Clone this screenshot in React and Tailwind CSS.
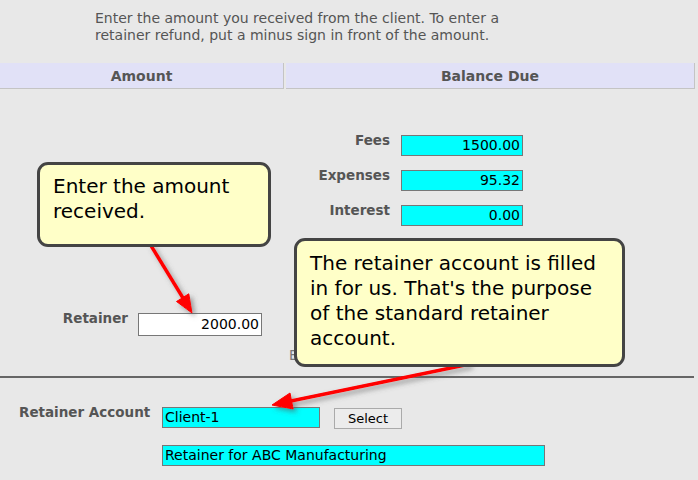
import React from 'react';

const cyanInput = 'h-[21px] bg-[#00ffff] border border-[#777] text-[14px] leading-[19px] text-black';

function FeeRow({ label, value }) {
  return (
    <div className="flex items-start h-[21px]">
      <div className="w-[104px] -mt-[3px] text-right text-[13.5px] leading-[16px] font-bold text-[#555]">{label}</div>
      <div className={`ml-[11px] w-[122px] text-right pr-[2px] ${cyanInput}`}>{value}</div>
    </div>
  );
}

function Arrows() {
  return (
    <svg className="absolute inset-0 pointer-events-none" width="698" height="480">
      <defs>
        <filter id="sh" x="-20%" y="-20%" width="140%" height="140%">
          <feDropShadow dx="3" dy="3" stdDeviation="2.5" floodColor="#555" floodOpacity="0.55" />
        </filter>
      </defs>
      <g filter="url(#sh)" fill="#ff0000" stroke="#ff0000">
        <line x1="150" y1="244" x2="183" y2="298" strokeWidth="3.5" />
        <polygon points="192,313 176.5,301.5 188.8,293.8" strokeWidth="1" />
        <line x1="470" y1="364" x2="291" y2="401" strokeWidth="3.5" />
        <polygon points="272,405 290,393 293.2,409" strokeWidth="1" />
      </g>
    </svg>
  );
}

export default function App() {
  return (
    <div className="relative w-[698px] h-[480px] overflow-hidden bg-[#e8e8e8] font-['DejaVu_Sans',sans-serif]">
      <p className="pl-[95px] pt-[10px] text-[14px] leading-[17px] text-[#555]">
        Enter the amount you received from the client. To enter a
        <br />
        retainer refund, put a minus sign in front of the amount.
      </p>

      <div className="mt-[19px] flex gap-[2px] pr-[3px] h-[26px] text-[14px] font-bold text-[#555]">
        <div className="w-[284px] flex items-center justify-center pt-[2px] bg-[#e1e1f7] border-r border-b border-[#c4c4c4]">Amount</div>
        <div className="flex-1 flex items-center justify-center pt-[2px] bg-[#e1e1f7] border-r border-b border-[#c4c4c4]">Balance Due</div>
      </div>

      <div className="flex h-[287px]">
        <div className="w-[286px] pt-[224px]">
          <div className="flex items-start justify-end pr-[24px]">
            <div className="-mt-[3px] text-[13.5px] leading-[16px] font-bold text-[#555]">Retainer</div>
            <div className="ml-[10px] w-[124px] h-[23px] bg-white border border-[#777] text-right pr-[2px] text-[14px] leading-[21px] text-black">2000.00</div>
          </div>
        </div>
        <div className="flex-1">
          <div className="pt-[46px] flex flex-col gap-[14px]">
            <FeeRow label="Fees" value="1500.00" />
            <FeeRow label="Expenses" value="95.32" />
            <FeeRow label="Interest" value="0.00" />
          </div>
          <div className="mt-[121px] pl-[3px] text-[13.5px] leading-[16px] text-[#777]">E</div>
        </div>
      </div>

      <div className="w-[694px] border-t-2 border-[#666]" />

      <div className="pt-[29px]">
        <div className="flex items-start pl-[19px]">
          <div className="w-[143px] -mt-[3px] text-[13.5px] leading-[16px] font-bold text-[#555]">Retainer Account</div>
          <div className={`w-[158px] pl-[2px] ${cyanInput}`}>Client-1</div>
          <button className="ml-[14px] mt-[1px] w-[68px] h-[21px] bg-[#ececec] border border-[#aaa] text-[13px] leading-[19px] text-black">Select</button>
        </div>
        <div className={`mt-[16px] ml-[162px] w-[383px] pl-[2px] ${cyanInput}`}>Retainer for ABC Manufacturing</div>
      </div>

      <Arrows />

      <div className="absolute left-[37px] top-[162px] w-[234px] h-[85px] border-[3px] border-[#444] rounded-[11px] bg-[#ffffc8] pl-[13px] pt-[9px] text-[20px] leading-[25px] text-black">
        Enter the amount
        <br />
        received.
      </div>
      <div className="absolute left-[294px] top-[238px] w-[331px] h-[129px] border-[3px] border-[#444] rounded-[11px] bg-[#ffffc8] pl-[13px] pt-[10px] text-[20px] leading-[25px] text-black">
        The retainer account is filled
        <br />
        in for us. That's the purpose
        <br />
        of the standard retainer
        <br />
        account.
      </div>
    </div>
  );
}
